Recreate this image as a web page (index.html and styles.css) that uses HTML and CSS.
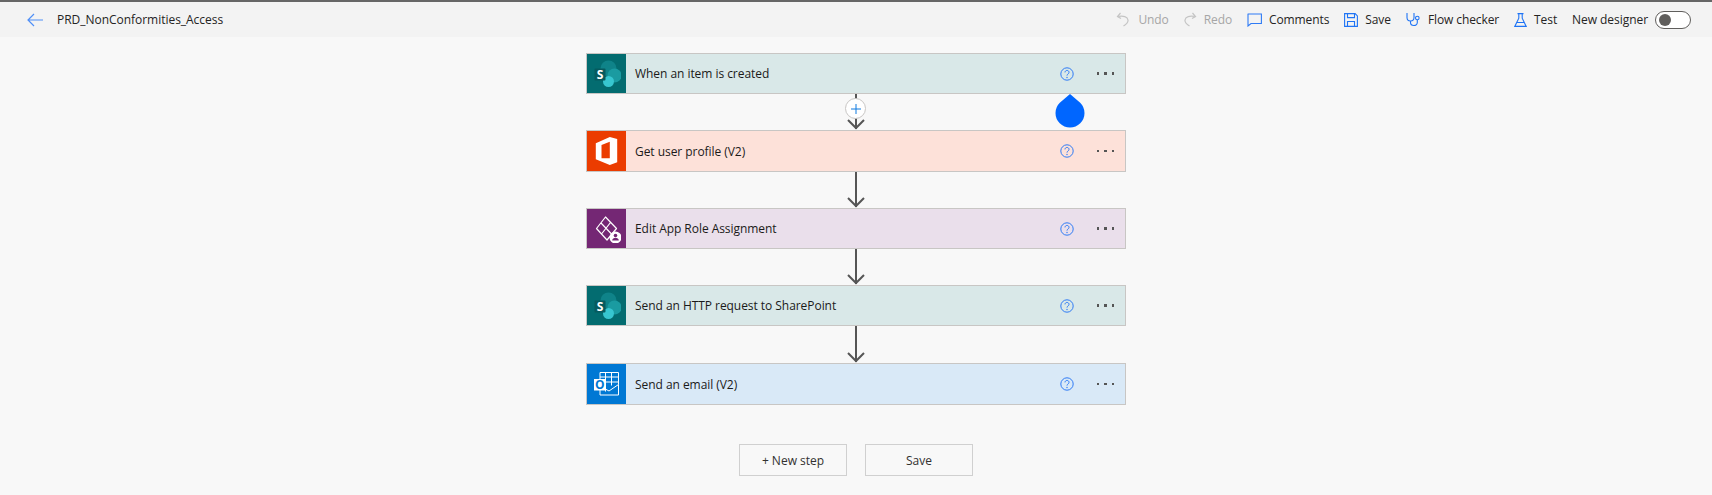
FILE: index.html
```html
<!DOCTYPE html>
<html lang="en">
<head>
    <meta charset="UTF-8">
    <title>PRD_NonConformities_Access</title>
    <link rel="stylesheet" href="styles.css">
</head>
<body>
    <!-- Barra de cima -->
    <header class="toolbar">
        <div class="toolbar-left">
            <svg class="back" width="16" height="14" viewBox="0 0 16 14"><path d="M7 1 1 7l6 6M1 7h15" fill="none" stroke="#4f8ff7" stroke-width="1.2"/></svg>
            <span class="flow-name">PRD_NonConformities_Access</span>
        </div>
        <div class="toolbar-right">
            <span class="cmd cmd-undo disabled">
                <svg width="13" height="15" viewBox="0 0 13 15"><path d="M4.500 1 1.500 4.500l3.500 2M1.500 4.500c6-1 10 0 10.500 3.500.3 2.500-2 4.500-4.500 6" fill="none" stroke="#c4c4c4" stroke-width="1.200"/></svg>
                Undo
            </span>
            <span class="cmd cmd-redo disabled">
                <svg width="13" height="15" viewBox="0 0 13 15"><path d="M8.500 1l3 3.500-3.500 2M11.500 4.500c-6-1-10 0-10.500 3.500-.3 2.500 2 4.500 4.500 6" fill="none" stroke="#c4c4c4" stroke-width="1.200"/></svg>
                Redo
            </span>
            <span class="cmd cmd-comments">
                <svg width="15" height="14" viewBox="0 0 15 14"><path d="M.6 1h13.800v9.500H4L1 13V1z" fill="none" stroke="#2f7bf5" stroke-width="1.100"/></svg>
                Comments
            </span>
            <span class="cmd cmd-save">
                <svg width="14" height="14" viewBox="0 0 14 14"><path d="M.6.6h10.500l2.300 2.300v10.500H.6zM3.500.6v4h7v-4M3.500 13.400V8.500h7v4.900" fill="none" stroke="#1f74f5" stroke-width="1.100"/></svg>
                Save
            </span>
            <span class="cmd cmd-check">
                <svg width="15" height="15" viewBox="0 0 15 15"><path d="M1 1v4.500a3.500 3.500 0 0 0 7 0V1M4.500 9v1.500c0 4 6.800 4 6.800 0V8" fill="none" stroke="#1f74f5" stroke-width="1.100"/><circle cx="11.300" cy="6" r="1.800" fill="none" stroke="#1f74f5" stroke-width="1.100"/></svg>
                Flow checker
            </span>
            <span class="cmd cmd-test">
                <svg width="13" height="14" viewBox="0 0 13 14"><path d="M3.500.6h6M4.800.6v4.600L.8 13.400h11.400L8.200 5.200V.6M3 9.500h7" fill="none" stroke="#1f74f5" stroke-width="1.100"/></svg>
                Test
            </span>
            <span class="designer-label">New designer</span>
            <span class="toggle"><span class="toggle-dot"></span></span>
        </div>
    </header>

    <main class="canvas">
        <div class="card card-sharepoint card-first">
            <span class="card-icon">
                <svg width="28" height="28" viewBox="0 0 28 28"><circle cx="15.500" cy="8.500" r="8" fill="#0f8389"/><circle cx="21.500" cy="15.500" r="7" fill="#1a9ba1"/><circle cx="15.500" cy="21.500" r="5.500" fill="#37c6d0"/><rect x="1.500" y="8.500" width="11" height="12" rx="1" fill="#075a5e"/><text x="7" y="18.700" class="icon-letter">S</text></svg>
            </span>
            <span class="card-title">When an item is created</span>
            <svg class="help" width="14" height="14" viewBox="0 0 14 14"><circle cx="7" cy="7" r="6.200" fill="none" stroke="#2f7bf5"/><path d="M5 5.400c0-2.600 4-2.600 4 0 0 1.600-2 1.600-2 3.200" fill="none" stroke="#2f7bf5"/><circle cx="7" cy="10.500" r=".7" fill="#2f7bf5"/></svg>
            <span class="dots"><i></i><i></i><i></i></span>
        </div>
        <div class="connector connector-plus">
            <span class="plus">
                <svg width="10" height="10" viewBox="0 0 10 10"><path d="M5 0v10M0 5h10" stroke="#0f7be0" stroke-width="1"/></svg>
            </span>
            <svg class="arrow" width="18" height="11" viewBox="0 0 18 11"><path d="M1 1l8 8 8-8" fill="none" stroke="#555" stroke-width="2"/></svg>
            <svg class="drop" width="30" height="34" viewBox="0 0 30 34"><path d="M15 0 25.200 8.700A14.500 14.500 0 1 1 4.800 8.700z" fill="#0066ff"/></svg>
        </div>
        <div class="card card-office">
            <span class="card-icon">
                <svg width="28" height="28" viewBox="0 0 28 28"><path d="M2.800 6.300 16.800 0l7.400 2v23.300L16.800 28 2.800 22.300zM8.500 8l8.300-3.300v16.600H8.500z" fill="#fff" fill-rule="evenodd"/></svg>
            </span>
            <span class="card-title">Get user profile (V2)</span>
            <svg class="help" width="14" height="14" viewBox="0 0 14 14"><circle cx="7" cy="7" r="6.200" fill="none" stroke="#2f7bf5"/><path d="M5 5.400c0-2.600 4-2.600 4 0 0 1.600-2 1.600-2 3.200" fill="none" stroke="#2f7bf5"/><circle cx="7" cy="10.500" r=".7" fill="#2f7bf5"/></svg>
            <span class="dots"><i></i><i></i><i></i></span>
        </div>
        <div class="connector">
            <svg class="arrow" width="18" height="11" viewBox="0 0 18 11"><path d="M1 1l8 8 8-8" fill="none" stroke="#555" stroke-width="2"/></svg>
        </div>
        <div class="card card-powerapps">
            <span class="card-icon">
                <svg width="28" height="28" viewBox="0 0 28 28"><path d="M3.500 13.500 12.500 2 23.500 13.500 14 25zM8 8l11 11.500M17.500 7.500 8.500 19" fill="none" stroke="#fff" stroke-width="1.200" stroke-linejoin="round"/><circle cx="22.500" cy="22.500" r="6" fill="#fff"/><circle cx="22.500" cy="20.500" r="1.800" fill="#742774"/><path d="M19.200 25.500c0-3.600 6.600-3.600 6.600 0z" fill="#742774"/></svg>
            </span>
            <span class="card-title">Edit App Role Assignment</span>
            <svg class="help" width="14" height="14" viewBox="0 0 14 14"><circle cx="7" cy="7" r="6.200" fill="none" stroke="#2f7bf5"/><path d="M5 5.400c0-2.600 4-2.600 4 0 0 1.600-2 1.600-2 3.200" fill="none" stroke="#2f7bf5"/><circle cx="7" cy="10.500" r=".7" fill="#2f7bf5"/></svg>
            <span class="dots"><i></i><i></i><i></i></span>
        </div>
        <div class="connector">
            <svg class="arrow" width="18" height="11" viewBox="0 0 18 11"><path d="M1 1l8 8 8-8" fill="none" stroke="#555" stroke-width="2"/></svg>
        </div>
        <div class="card card-sharepoint">
            <span class="card-icon">
                <svg width="28" height="28" viewBox="0 0 28 28"><circle cx="15.500" cy="8.500" r="8" fill="#0f8389"/><circle cx="21.500" cy="15.500" r="7" fill="#1a9ba1"/><circle cx="15.500" cy="21.500" r="5.500" fill="#37c6d0"/><rect x="1.500" y="8.500" width="11" height="12" rx="1" fill="#075a5e"/><text x="7" y="18.700" class="icon-letter">S</text></svg>
            </span>
            <span class="card-title">Send an HTTP request to SharePoint</span>
            <svg class="help" width="14" height="14" viewBox="0 0 14 14"><circle cx="7" cy="7" r="6.200" fill="none" stroke="#2f7bf5"/><path d="M5 5.400c0-2.600 4-2.600 4 0 0 1.600-2 1.600-2 3.200" fill="none" stroke="#2f7bf5"/><circle cx="7" cy="10.500" r=".7" fill="#2f7bf5"/></svg>
            <span class="dots"><i></i><i></i><i></i></span>
        </div>
        <div class="connector connector-last">
            <svg class="arrow" width="18" height="11" viewBox="0 0 18 11"><path d="M1 1l8 8 8-8" fill="none" stroke="#555" stroke-width="2"/></svg>
        </div>
        <div class="card card-outlook">
            <span class="card-icon">
                <svg width="28" height="28" viewBox="0 0 28 28"><path d="M7 2.500h18.500v12M7 2.500V9M12.500 2.500v19M18.500 2.500v13M7 7h18.500M7 12h18.500M7 25h18.500V14.500L16 21l-9-5v9" fill="none" stroke="#fff" stroke-width="1"/><rect x="1" y="9" width="11.500" height="11.500" fill="#fff"/><text x="6.700" y="18.500" class="icon-letter icon-letter-o">O</text></svg>
            </span>
            <span class="card-title">Send an email (V2)</span>
            <svg class="help" width="14" height="14" viewBox="0 0 14 14"><circle cx="7" cy="7" r="6.200" fill="none" stroke="#2f7bf5"/><path d="M5 5.400c0-2.600 4-2.600 4 0 0 1.600-2 1.600-2 3.200" fill="none" stroke="#2f7bf5"/><circle cx="7" cy="10.500" r=".7" fill="#2f7bf5"/></svg>
            <span class="dots"><i></i><i></i><i></i></span>
        </div>

        <div class="actions">
            <button class="btn" type="button">+ New step</button>
            <button class="btn" type="button">Save</button>
        </div>
    </main>
</body>
</html>
```

FILE: styles.css
```css
* {
    margin: 0;
    padding: 0;
    box-sizing: border-box;
}

body {
    font-family: "Open Sans", "Noto Sans", sans-serif;
    font-size: 12px;
    color: #252423;
    background-color: #f8f8f8;
    height: 495px;
    overflow: hidden;
}

/* Barra de cima */
.toolbar {
    height: 37px;
    border-top: 2px solid #666;
    background-color: #f3f3f3;
    display: flex;
    align-items: center;
    justify-content: space-between;
    padding: 0 21px 0 27px;
}

.toolbar-left {
    display: flex;
    align-items: center;
    gap: 14px;
}

.flow-name {
    letter-spacing: -0.03px;
}

.toolbar-right {
    display: flex;
    align-items: center;
}

.cmd {
    display: flex;
    align-items: center;
    gap: 7px;
    margin-right: 15px;
    letter-spacing: -0.1px;
}

.cmd.disabled {
    color: #a6a6a6;
}

.cmd-undo {
    gap: 9px;
}

.designer-label {
    letter-spacing: -0.05px;
    margin-right: 7px;
}

.toggle {
    width: 36px;
    height: 18px;
    border: 1px solid #605e5c;
    border-radius: 9px;
    background-color: #fff;
    display: flex;
    align-items: center;
    padding-left: 3px;
}

.toggle-dot {
    width: 12px;
    height: 12px;
    border-radius: 50%;
    background-color: #605e5c;
}

/* Cartoes do fluxo */
.canvas {
    display: flex;
    flex-direction: column;
    align-items: center;
    padding-top: 16px;
    width: 540px;
    margin-left: 586px;
}

.card {
    width: 540px;
    height: 41px;
    display: flex;
    align-items: center;
    border: 1px solid #c8c6c4;
    flex-shrink: 0;
}

.card-office,
.card-outlook {
    height: 42px;
}

.card-icon {
    width: 39px;
    align-self: stretch;
    display: flex;
    align-items: center;
    justify-content: center;
    flex-shrink: 0;
}

.card-title {
    flex: 1;
    margin-left: 9px;
    letter-spacing: -0.05px;
    color: #1b1a19;
}

.help {
    margin-right: 23px;
}

.dots {
    display: flex;
    gap: 5px;
    margin-right: 11px;
}

.dots i {
    width: 2.5px;
    height: 2.5px;
    background-color: #555;
}

.card-sharepoint { background-color: #d9e8e8; }
.card-sharepoint .card-icon { background-color: #036c70; }
.card-office { background-color: #fde1d9; }
.card-office .card-icon { background-color: #eb3c00; }
.card-powerapps { background-color: #eadfeb; }
.card-powerapps .card-icon { background-color: #742774; }
.card-outlook { background-color: #d9e9f7; }
.card-outlook .card-icon { background-color: #0078d4; }

.icon-letter {
    font-family: "Open Sans", sans-serif;
    font-size: 12px;
    font-weight: 700;
    fill: #fff;
    text-anchor: middle;
}

.icon-letter-o {
    fill: #0078d4;
}

/* Setas entre os cartoes */
.connector {
    position: relative;
    width: 100%;
    height: 36px;
    display: flex;
    flex-direction: column;
    align-items: center;
    justify-content: flex-end;
    flex-shrink: 0;
}

.connector-last {
    height: 37px;
}

.connector::before {
    content: "";
    position: absolute;
    top: 0;
    bottom: 1px;
    left: 50%;
    width: 2px;
    margin-left: -1px;
    background-color: #555;
}

.arrow {
    position: relative;
}

.plus {
    position: absolute;
    top: 4px;
    left: 50%;
    margin-left: -11px;
    width: 21px;
    height: 21px;
    border: 1px solid #c8c6c4;
    border-radius: 50%;
    background-color: #fff;
    display: flex;
    align-items: center;
    justify-content: center;
    z-index: 1;
}

.drop {
    position: absolute;
    top: 0;
    left: 469px;
}

/* Botoes de baixo */
.actions {
    display: flex;
    gap: 18px;
    margin-top: 39px;
}

.btn {
    width: 108px;
    height: 32px;
    font-family: inherit;
    font-size: 12px;
    color: #323130;
    background-color: #f8f8f8;
    border: 1px solid #d0d0d0;
}
```
